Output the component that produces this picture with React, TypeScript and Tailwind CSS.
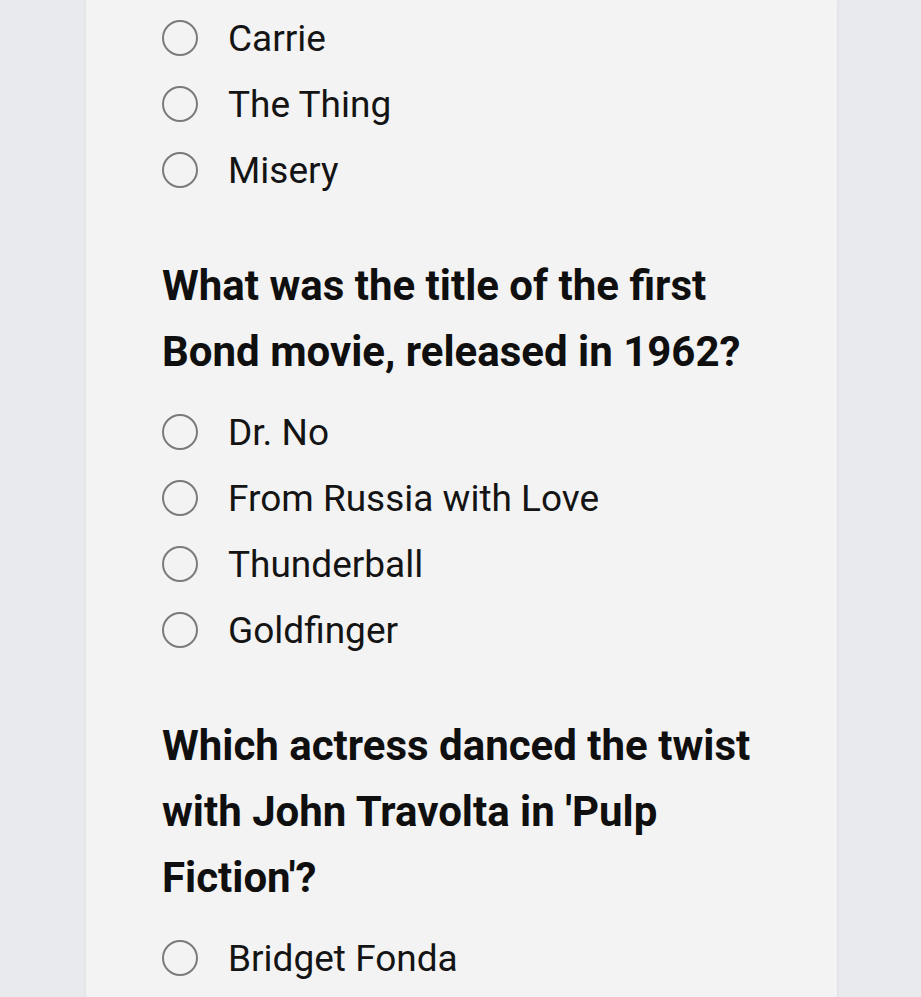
import React from "react";

function Radio({ label }: { label: string }) {
  return (
    <div className="flex h-[66px] items-center">
      <span className="box-border h-[36px] w-[36px] shrink-0 rounded-full border-[2.5px] border-[#7b7b7b]" />
      <span className="ml-[30px] text-[37px] leading-none text-[#141414]">{label}</span>
    </div>
  );
}

function Question({ title, options }: { title: React.ReactNode; options: string[] }) {
  return (
    <div className="mt-[50px]">
      <h2 className="text-[42px] font-bold leading-[66px] text-[#0f0f0f]">{title}</h2>
      <div className="mt-[14px]">
        {options.map((o) => (
          <Radio key={o} label={o} />
        ))}
      </div>
    </div>
  );
}

export default function App() {
  return (
    <div
      className="h-[997px] w-full overflow-hidden bg-[#e9eaed] pl-[86px]"
      style={{ fontFamily: "Roboto, 'Noto Sans', sans-serif" }}
    >
      <div className="h-[997px] w-[751px] overflow-hidden bg-[#f3f3f3] pl-[76px] pt-[5px] shadow-[0_0_3px_rgba(0,0,0,0.08)]">
        <Radio label="Carrie" />
        <Radio label="The Thing" />
        <Radio label="Misery" />
        <Question
          title={
            <>
              What was the title of the first
              <br />
              Bond movie, released in 1962?
            </>
          }
          options={["Dr. No", "From Russia with Love", "Thunderball", "Goldfinger"]}
        />
        <Question
          title={
            <>
              Which actress danced the twist
              <br />
              with John Travolta in 'Pulp
              <br />
              Fiction'?
            </>
          }
          options={["Bridget Fonda"]}
        />
      </div>
    </div>
  );
}
